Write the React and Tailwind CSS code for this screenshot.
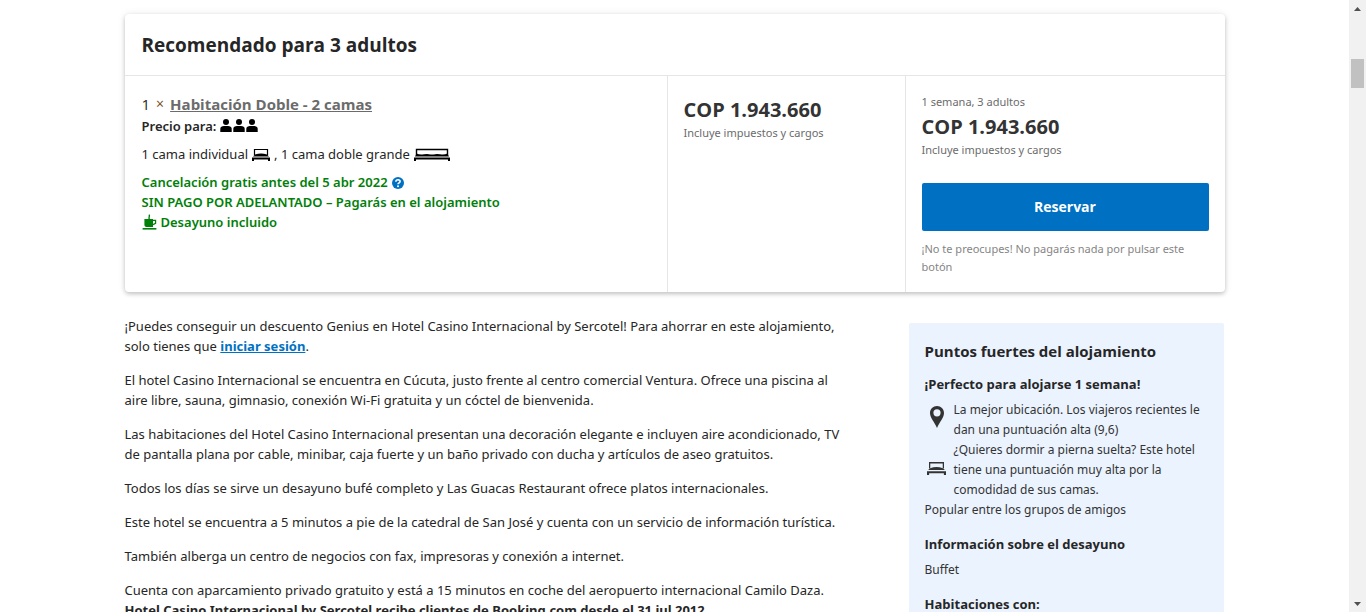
import React from "react";

function Person() {
  return (
    <svg viewBox="0 0 12 14" className="h-3.5 w-3 shrink-0" fill="currentColor" aria-hidden="true">
      <circle cx="6" cy="3" r="3" />
      <path d="M0.3 13V9.8C0.3 8 2 7 4 7H8C10 7 11.7 8 11.7 9.8V13Z" />
    </svg>
  );
}

function SingleBed({ className }) {
  return (
    <svg viewBox="0 0 18 14" className={className} fill="none" stroke="currentColor" aria-hidden="true">
      <path d="M2.5 8V2.5H15.5V8" strokeWidth="1.2" />
      <path d="M3 7.6Q9 5.6 15 7.6L17 9.4H1Z" fill="currentColor" stroke="none" />
      <path d="M1 14V11.5H17V14" strokeWidth="2" />
    </svg>
  );
}

function DoubleBed() {
  return (
    <svg viewBox="0 0 36 14" className="h-3.5 w-9 shrink-0" fill="none" stroke="currentColor" aria-hidden="true">
      <path d="M2.5 8V2.5H33.5V8" strokeWidth="1.4" />
      <path d="M2.5 6.6Q6 8 10 7.2T16.5 7.6H19.5Q22 6.4 26 7.2T33.5 6.6L35 9.4H1Z" fill="currentColor" stroke="none" />
      <path d="M1 14V11.5H35V14" strokeWidth="2" />
    </svg>
  );
}

function Help() {
  return (
    <svg viewBox="0 0 12 12" className="size-3" aria-hidden="true">
      <circle cx="6" cy="6" r="6" fill="#0071c2" />
      <path d="M3.9 4.7C3.9 2.2 8.1 2.2 8.1 4.6C8.1 5.9 6 5.8 6 7.3" fill="none" stroke="#fff" strokeWidth="1.6" />
      <circle cx="6" cy="9.3" r="1" fill="#fff" />
    </svg>
  );
}

function Cup() {
  return (
    <svg viewBox="0 0 15 16" className="h-4 w-[15px] shrink-0" fill="currentColor" aria-hidden="true">
      <path d="M2.4 5H11V12.9H4.4C3 12.9 2.4 12 2.4 10.6Z" />
      <path d="M11 6.4H13.6V9.4L11 10.6" fill="none" stroke="currentColor" strokeWidth="1.2" />
      <path d="M7.6 5C5.6 3.6 8.6 2.4 7 0.6" fill="none" stroke="currentColor" strokeWidth="1.4" />
      <path d="M0.6 14H14.4V15.6H0.6Z" />
    </svg>
  );
}

function Pin() {
  return (
    <svg viewBox="0 0 14 22" className="h-[22px] w-3.5" fill="currentColor" aria-hidden="true">
      <path fillRule="evenodd" d="M7 0C3.1 0 0 3.1 0 6.9C0 11.6 4.4 15.8 7 22C9.6 15.8 14 11.6 14 6.9C14 3.1 10.9 0 7 0ZM7 3.2A3.6 3.6 0 1 1 7 10.4A3.6 3.6 0 1 1 7 3.2Z" />
    </svg>
  );
}

function Price() {
  return (
    <>
      <div className="font-['Open_Sans',sans-serif] text-xl leading-6 font-bold text-[#333]">COP 1.943.660</div>
      <div className="mt-0.5 text-[11px] leading-[18px] text-[#6b6b6b]">Incluye impuestos y cargos</div>
    </>
  );
}

function Recommendation() {
  return (
    <section className="rounded-sm bg-white shadow-[0_2px_4px_rgba(0,0,0,0.2),0_0_8px_rgba(0,0,0,0.08)]">
      <h2 className="border-b border-[#e6e6e6] px-[17px] pt-[17px] pb-4 font-['Open_Sans',sans-serif] text-[19px] leading-7 font-bold text-[#262626]">
        Recomendado para 3 adultos
      </h2>
      <div className="grid grid-cols-[543fr_238fr_319fr] divide-x divide-[#e6e6e6]">
        <div className="px-[17px] pt-[18px]">
          <div className="flex gap-1.5 font-['Open_Sans',sans-serif] text-[15px] leading-5">
            <span>1</span>
            <span className="text-sm leading-5 text-[#7a4a1c]">×</span>
            <a href="#habitacion" className="font-bold text-[#6b6b6b] underline">Habitación Doble - 2 camas</a>
          </div>
          <div className="mt-0.5 flex items-center gap-1 font-semibold">
            Precio para:
            <span className="flex gap-px text-black"><Person /><Person /><Person /></span>
          </div>
          <div className="mt-2 flex items-center gap-1">
            1 cama individual
            <SingleBed className="h-3.5 w-[18px] shrink-0 text-black" />
            <span>, 1 cama doble grande</span>
            <span className="text-black"><DoubleBed /></span>
          </div>
          <div className="mt-2 font-semibold text-[#008009]">
            <div className="flex items-center gap-1">
              Cancelación gratis antes del 5 abr 2022
              <button type="button" aria-label="Más información" className="pt-0.5"><Help /></button>
            </div>
            <div>SIN PAGO POR ADELANTADO – Pagarás en el alojamiento</div>
            <div className="flex items-center gap-1"><Cup />Desayuno incluido</div>
          </div>
        </div>
        <div className="px-4 pt-[22px]"><Price /></div>
        <div className="px-4 pt-[17px] pb-4">
          <div className="mb-1 text-[11px] leading-[18px] text-[#6b6b6b]">1 semana, 3 adultos</div>
          <Price />
          <button type="button" className="mt-6 h-12 w-full rounded-xs bg-[#0071c2] font-['Open_Sans',sans-serif] text-sm font-bold text-white">
            Reservar
          </button>
          <p className="mt-[9px] text-[11px] leading-[18px] text-[#858585]">
            ¡No te preocupes! No pagarás nada por pulsar este<br />botón
          </p>
        </div>
      </div>
    </section>
  );
}

function Description() {
  return (
    <div className="flex w-[740px] flex-col gap-3.5">
      <p>
        ¡Puedes conseguir un descuento Genius en Hotel Casino Internacional by Sercotel! Para ahorrar en este alojamiento,<br />
        solo tienes que <a href="#sesion" className="font-bold text-[#0071c2] underline">iniciar sesión</a>.
      </p>
      <p>
        El hotel Casino Internacional se encuentra en Cúcuta, justo frente al centro comercial Ventura. Ofrece una piscina al<br />
        aire libre, sauna, gimnasio, conexión Wi-Fi gratuita y un cóctel de bienvenida.
      </p>
      <p>
        Las habitaciones del Hotel Casino Internacional presentan una decoración elegante e incluyen aire acondicionado, TV<br />
        de pantalla plana por cable, minibar, caja fuerte y un baño privado con ducha y artículos de aseo gratuitos.
      </p>
      <p>Todos los días se sirve un desayuno bufé completo y Las Guacas Restaurant ofrece platos internacionales.</p>
      <p>Este hotel se encuentra a 5 minutos a pie de la catedral de San José y cuenta con un servicio de información turística.</p>
      <p>También alberga un centro de negocios con fax, impresoras y conexión a internet.</p>
      <p>
        Cuenta con aparcamiento privado gratuito y está a 15 minutos en coche del aeropuerto internacional Camilo Daza.<br />
        <strong>Hotel Casino Internacional by Sercotel recibe clientes de Booking.com desde el 31 jul 2012.</strong>
      </p>
    </div>
  );
}

function Highlights() {
  return (
    <aside className="mt-[7px] mr-px w-[315px] shrink-0 rounded-xs bg-[#ebf3ff] px-4 pt-4 pb-8 text-xs leading-5 text-[#333]">
      <h3 className="font-['Open_Sans',sans-serif] text-[15px] leading-6 font-bold text-[#262626]">Puntos fuertes del alojamiento</h3>
      <h4 className="mt-[11px] font-['Open_Sans',sans-serif] text-[13px] leading-5 font-bold text-[#262626]">¡Perfecto para alojarse 1 semana!</h4>
      <ul className="mt-1.5">
        <li className="flex items-center gap-[5px]">
          <span className="flex w-6 shrink-0 justify-center pb-1.5"><Pin /></span>
          <span>La mejor ubicación. Los viajeros recientes le<br />dan una puntuación alta (9,6)</span>
        </li>
        <li className="flex items-center gap-[5px]">
          <span className="flex w-6 shrink-0 justify-center pb-1.5"><SingleBed className="h-[15px] w-[19px]" /></span>
          <span>¿Quieres dormir a pierna suelta? Este hotel<br />tiene una puntuación muy alta por la<br />comodidad de sus camas.</span>
        </li>
      </ul>
      <p>Popular entre los grupos de amigos</p>
      <h4 className="mt-3.5 font-['Open_Sans',sans-serif] text-[13px] leading-5 font-bold text-[#262626]">Información sobre el desayuno</h4>
      <p className="mt-1.5">Buffet</p>
      <h4 className="mt-3.5 font-['Open_Sans',sans-serif] text-[13px] leading-5 font-bold text-[#262626]">Habitaciones con:</h4>
    </aside>
  );
}

function ScrollTrack() {
  return (
    <div className="flex w-[17px] shrink-0 flex-col items-center bg-[#f1f1f1] text-[#505050]" aria-hidden="true">
      <svg viewBox="0 0 17 17" className="size-[17px]" fill="currentColor"><path d="M5 11L8.5 7L12 11Z" /></svg>
      <div className="mt-[42px] h-[29px] w-[13px] bg-[#c1c1c1]" />
      <svg viewBox="0 0 17 17" className="mt-auto size-[17px]" fill="currentColor"><path d="M5 7L8.5 11L12 7Z" /></svg>
    </div>
  );
}

export default function App() {
  return (
    <div className="flex h-screen overflow-hidden bg-white font-['Noto_Sans',sans-serif] text-[13px] leading-5 text-[#262626]">
      <main className="min-w-0 flex-1 overflow-hidden">
        <div className="mx-auto max-w-[1100px] pt-3.5">
          <Recommendation />
          <div className="mt-6 flex justify-between">
            <Description />
            <Highlights />
          </div>
        </div>
      </main>
      <ScrollTrack />
    </div>
  );
}
